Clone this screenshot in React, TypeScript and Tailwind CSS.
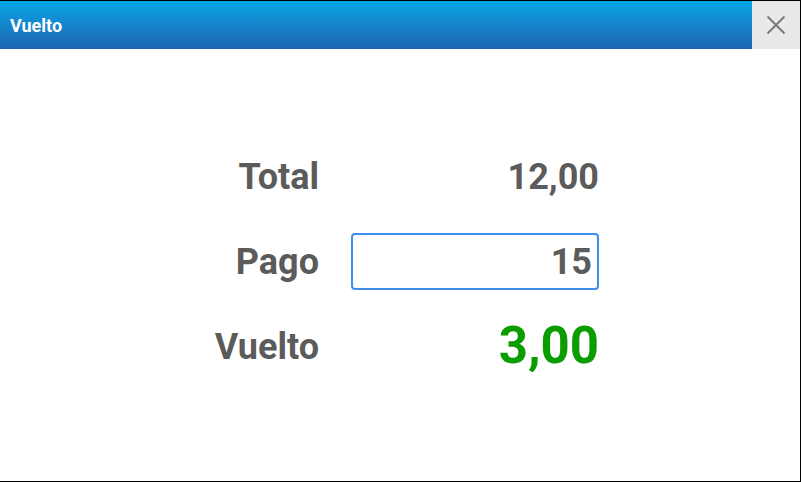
import { useState } from "react"

function CloseIcon() {
  return (
    <svg width="20" height="20" viewBox="0 0 20 20" fill="none">
      <path d="M1.5 1.5 L18.5 18.5 M18.5 1.5 L1.5 18.5" stroke="#767676" strokeWidth="1.8" />
    </svg>
  )
}

export default function App() {
  const [pago, setPago] = useState("15")
  const total = 12
  const vuelto = (Number(pago) || 0) - total

  return (
    <div className="w-[801px] h-[482px] bg-white border-t border-r border-b border-black flex flex-col font-['Roboto',sans-serif]">
      <header className="flex h-12 shrink-0 bg-gradient-to-b from-[#02a6e7] to-[#1c65b0]">
        <h1 className="flex-1 flex items-center pl-[10px] text-white text-[18px] font-bold">Vuelto</h1>
        <button className="w-12 h-12 flex items-center justify-center bg-[#e8e8e8]">
          <CloseIcon />
        </button>
      </header>
      <div className="grid grid-cols-[150px_248px] gap-x-8 gap-y-[28px] pt-[99px] pl-[169px] text-[#5b5b5b] font-bold">
        <div className="h-[57px] flex items-center justify-end text-[36px]">Total</div>
        <div className="h-[57px] flex items-center justify-end text-[36px]">12,00</div>
        <div className="h-[57px] flex items-center justify-end text-[36px]">Pago</div>
        <input
          value={pago}
          onChange={(e) => setPago(e.target.value)}
          className="h-[57px] w-[248px] rounded-[4px] border-2 border-[#3d8fe9] pl-[6px] pr-[5px] text-right text-[36px] font-bold text-[#5b5b5b] outline-none"
        />
        <div className="h-[57px] flex items-center justify-end text-[36px]">Vuelto</div>
        <div className="h-[57px] flex items-center justify-end text-[51px] text-[#0b9c00]">
          {vuelto.toFixed(2).replace(".", ",")}
        </div>
      </div>
    </div>
  )
}
